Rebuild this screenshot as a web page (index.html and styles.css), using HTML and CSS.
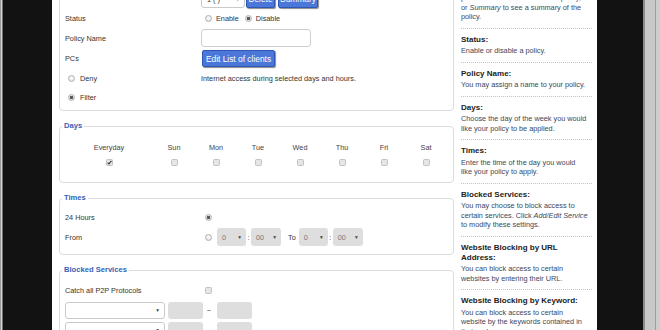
FILE: index.html
```html
<!DOCTYPE html>
<html lang="en">
<head>
    <meta charset="UTF-8">
    <meta name="viewport" content="width=device-width, initial-scale=1.0">
    <title>Access Restrictions</title>
    <link rel="stylesheet" href="styles.css">
</head>
<body>

<div class="frame">
    <div class="edge-left"></div>
    <div class="bezel"></div>

    <div class="page">
        <div class="main">

            <fieldset class="policy">
                <div class="row r-top">
                    <span class="top-label">Policy</span>
                    <div class="ctl">
                        <div class="dd on w44">1 ( ) <span class="caret">&#9660;</span></div>
                        <button class="btn b-del">Delete</button>
                        <button class="btn b-sum">Summary</button>
                    </div>
                </div>
                <div class="row r-status">
                    <span>Status</span>
                    <div class="ctl">
                        <span class="radio"></span><span class="opt">Enable</span>
                        <span class="radio on gap"></span><span class="opt">Disable</span>
                    </div>
                </div>
                <div class="row r-name">
                    <span>Policy Name</span>
                    <div class="ctl"><input type="text" class="text"></div>
                </div>
                <div class="row r-pcs">
                    <span>PCs</span>
                    <div class="ctl"><button class="btn b-edit">Edit List of clients</button></div>
                </div>
                <div class="row r-deny">
                    <div class="ctl"><span class="radio first"></span><span class="opt2">Deny</span></div>
                    <span>Internet access during selected days and hours.</span>
                </div>
                <div class="row r-filter">
                    <div class="ctl"><span class="radio on first"></span><span class="opt2">Filter</span></div>
                    <span></span>
                </div>
            </fieldset>

            <fieldset class="days">
                <legend>Days</legend>
                <div class="day-grid day-head">
                    <span>Everyday</span><span>Sun</span><span>Mon</span><span>Tue</span>
                    <span>Wed</span><span>Thu</span><span>Fri</span><span>Sat</span>
                </div>
                <div class="day-grid day-boxes">
                    <span class="check on"><svg viewBox="0 0 7 7" width="7" height="7"><path d="M1.6 3.6 L2.9 4.9 L5.4 1.9" fill="none" stroke="#333" stroke-width="1.1"/></svg></span>
                    <span class="check"></span><span class="check"></span><span class="check"></span>
                    <span class="check"></span><span class="check"></span><span class="check"></span><span class="check"></span>
                </div>
            </fieldset>

            <fieldset class="times">
                <legend>Times</legend>
                <div class="row r-20 first-row">
                    <span>24 Hours</span>
                    <div class="ctl"><span class="radio on"></span></div>
                </div>
                <div class="row r-20">
                    <span>From</span>
                    <div class="ctl">
                        <span class="radio"></span>
                        <div class="dd off w29 ml5">0 <span class="caret">&#9660;</span></div>
                        <span class="colon">:</span>
                        <div class="dd off w30">00 <span class="caret">&#9660;</span></div>
                        <span class="to">To</span>
                        <div class="dd off w29">0 <span class="caret">&#9660;</span></div>
                        <span class="colon">:</span>
                        <div class="dd off w30">00 <span class="caret">&#9660;</span></div>
                    </div>
                </div>
            </fieldset>

            <fieldset class="blocked">
                <legend>Blocked Services</legend>
                <div class="row r-20 first-row">
                    <span>Catch all P2P Protocols</span>
                    <div class="ctl"><span class="check cb-p2p"></span></div>
                </div>
                <div class="svc">
                    <div class="dd on w100"><span></span><span class="caret">&#9660;</span></div>
                    <div class="port"></div>
                    <span class="tilde">~</span>
                    <div class="port"></div>
                </div>
                <div class="svc">
                    <div class="dd on w100"><span></span><span class="caret">&#9660;</span></div>
                    <div class="port"></div>
                    <span class="tilde">~</span>
                    <div class="port"></div>
                </div>
            </fieldset>

        </div>

        <div class="help">
            <div class="tip top">
                <p>pointer then <i>Delete</i> to delete a policy,<br>or <i>Summary</i> to see a summary of the<br>policy.</p>
            </div>
            <div class="tip">
                <h4>Status:</h4>
                <p>Enable or disable a policy.</p>
            </div>
            <div class="tip">
                <h4>Policy Name:</h4>
                <p>You may assign a name to your policy.</p>
            </div>
            <div class="tip">
                <h4>Days:</h4>
                <p>Choose the day of the week you would<br>like your policy to be applied.</p>
            </div>
            <div class="tip">
                <h4>Times:</h4>
                <p>Enter the time of the day you would<br>like your policy to apply.</p>
            </div>
            <div class="tip">
                <h4>Blocked Services:</h4>
                <p>You may choose to block access to<br>certain services. Click <i>Add/Edit Service</i><br>to modify these settings.</p>
            </div>
            <div class="tip">
                <h4>Website Blocking by URL<br>Address:</h4>
                <p>You can block access to certain<br>websites by entering their URL.</p>
            </div>
            <div class="tip">
                <h4>Website Blocking by Keyword:</h4>
                <p>You can block access to certain<br>website by the keywords contained in<br>their webpage.</p>
            </div>
        </div>
    </div>

    <div class="bezel bezel-right"></div>
    <div class="edge-right"></div>
</div>

</body>
</html>
```

FILE: styles.css
```css
body {
    margin: 0;
    font-family: "Liberation Sans", Arial, sans-serif;
    font-size: 7.3px;
    color: #333;
    background-color: #121212;
}

.frame {
    display: flex;
    height: 330px;
    overflow: hidden;
}

.edge-left {
    width: 3px;
    flex: none;
    background: linear-gradient(to right, #9a9a9a 0 1px, #d6d6d6 1px 2px, #707070 2px 3px);
}

.bezel {
    width: 49px;
    flex: none;
    background-color: #121212;
}

.bezel-right {
    width: 46px;
}

.edge-right {
    width: 17px;
    flex: none;
    background: linear-gradient(to right, #8c8c8c 0 2px, #c8c8c8 2px 12px, #9e9e9e 12px 13px, #cdcdcd 13px 17px);
}

.page {
    width: 545px;
    flex: none;
    box-sizing: border-box;
    padding-left: 7px;
    background-color: #fff;
    display: flex;
    gap: 7px;
    overflow: hidden;
}

.main {
    width: 395px;
    flex: none;
}

/* fieldsets */
fieldset {
    margin: 10px 0 0;
    padding: 0 6px 0 5px;
    border: 1px solid #dcdcdc;
    border-radius: 4px;
    min-width: 0;
}

fieldset.policy {
    margin-top: -14px;
    padding-top: 2px;
    padding-bottom: 3px;
}

legend {
    margin-left: -3px;
    padding: 0 2px;
    font-weight: bold;
    font-size: 7.6px;
    line-height: 10px;
    color: #3562b5;
}

.row {
    display: grid;
    grid-template-columns: 136px 1fr;
    align-items: center;
    height: 20px;
}

.r-top { height: 20px; }
.r-status { height: 19px; }
.r-name { height: 20px; }
.r-pcs { height: 21px; }
.r-deny { height: 19px; }
.r-filter { height: 19px; }

.top-label {
    margin-bottom: 8px;
}

.ctl {
    display: flex;
    align-items: center;
}

/* radios and checkboxes */
.radio {
    width: 7px;
    height: 7px;
    flex: none;
    box-sizing: border-box;
    border: 1px solid #b2b2b2;
    border-radius: 50%;
    background: radial-gradient(circle at 50% 40%, #fff, #dadada);
    margin-left: 4px;
}

.radio.on {
    background: radial-gradient(circle, #5a5a5a 0 1.4px, #e2e2e2 2px);
}

.radio.first {
    margin-left: 3px;
}

.radio.gap {
    margin-left: 6px;
}

.opt {
    margin-left: 4px;
}

.opt2 {
    margin-left: 5px;
}

.check {
    width: 7px;
    height: 7px;
    box-sizing: border-box;
    border: 1px solid #c2c2c2;
    border-radius: 1.5px;
    background-color: #e6e6e6;
    display: flex;
}

.check svg {
    margin: -1px;
}

.cb-p2p {
    margin-left: 4px;
}

/* inputs and buttons */
.text {
    width: 110px;
    height: 18px;
    box-sizing: border-box;
    margin: 0;
    border: 1px solid #cfcfcf;
    border-radius: 3px;
}

.btn {
    height: 17px;
    padding: 0;
    font-family: inherit;
    font-size: 8.4px;
    color: #fff;
    background-color: #4b78d8;
    border: 1px solid #2f58b4;
    border-radius: 2px;
    box-shadow: 1px 1px 1px #8a8a8a;
}

.b-del {
    width: 29px;
    margin-left: 1px;
}

.b-sum {
    width: 40px;
    margin-left: 3px;
}

.b-edit {
    width: 73px;
    margin-left: 1px;
}

.dd {
    height: 18px;
    box-sizing: border-box;
    display: flex;
    align-items: center;
    justify-content: space-between;
    padding: 0 4px 0 5px;
    border-radius: 3px;
}

.dd.on {
    background-color: #fff;
    border: 1px solid #cacaca;
}

.dd.off {
    background-color: #dedede;
    color: #7a7a7a;
}

.caret {
    font-size: 4.8px;
    color: #444;
}

.w29 { width: 29px; }
.w30 { width: 30px; }
.w44 { width: 44px; }
.w100 { width: 100px; }
.ml5 { margin-left: 5px; }

.colon {
    width: 5px;
    text-align: center;
}

.to {
    margin: 0 3px 0 7px;
}

/* days */
.day-grid {
    display: grid;
    grid-template-columns: 88px repeat(7, 42px);
    justify-items: center;
    align-items: center;
}

.day-head {
    margin-top: 11px;
    height: 10px;
    color: #444;
}

.day-boxes {
    margin-top: 4px;
    height: 12px;
    margin-bottom: 14px;
}

/* times */
.times .first-row {
    margin-top: 4px;
}

.times .row:last-child {
    margin-bottom: 7px;
}

/* blocked services */
.blocked .first-row {
    margin-top: 5px;
}

.svc {
    display: flex;
    align-items: center;
    margin-top: 2px;
    margin-bottom: 3px;
}

.svc .dd {
    height: 17px;
}

.port {
    width: 35px;
    height: 17px;
    margin-left: 3px;
    border-radius: 3px;
    background-color: #dedede;
}

.tilde {
    width: 8px;
    margin-left: 2px;
    margin-right: 1px;
    text-align: center;
}

/* help column */
.help {
    width: 131px;
    flex: none;
    margin-top: -7px;
    font-size: 7.3px;
    color: #3b475c;
}

.tip {
    padding: 6px 0;
    border-bottom: 1px dotted #c4c4c4;
}

.tip.top {
    padding-top: 0;
}

.tip h4 {
    margin: 0 0 1.5px;
    font-size: 8px;
    line-height: 10px;
    color: #222;
}

.tip p {
    margin: 0;
    line-height: 9.5px;
}
```
